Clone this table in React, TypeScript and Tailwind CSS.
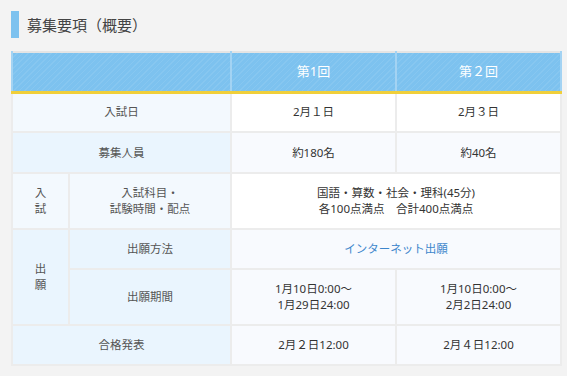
export default function App() {
  const label = "border-2 border-[#ececec] text-center align-middle text-[11.5px] leading-[16px] text-[#555]"
  const data = "border-2 border-[#ececec] text-center align-middle text-[11.5px] leading-[16px] text-[#333]"

  return (
    <div
      className="h-[376px] w-[567px] bg-[#f3f3f3] pl-[11px] pt-[11px]"
      style={{ fontFamily: '"Noto Sans", "Noto Sans CJK JP", sans-serif' }}
    >
      {/* Title */}
      <div className="flex h-[27px] items-center">
        <div className="h-full w-[8px] bg-[#7dc2ef]" />
        <h2 className="ml-[8px] text-[15px] leading-[20px] text-[#444]">募集要項（概要）</h2>
      </div>

      <table className="mt-[13px] w-[549px] table-fixed border-collapse border-2 border-[#e4e4e4]">
        <colgroup>
          <col className="w-[57px]" />
          <col className="w-[162px]" />
          <col className="w-[165px]" />
          <col className="w-[165px]" />
        </colgroup>
        <thead>
          <tr className="h-[40px] bg-[#7dc2ef] bg-[repeating-linear-gradient(135deg,rgba(255,255,255,0.08)_0px,rgba(255,255,255,0.08)_1px,transparent_1px,transparent_4px)]">
            <th colSpan={2} className="border-x-2 border-b-[3px] border-x-[#a3d3f3] border-b-[#f0cf3a]" />
            <th className="border-x-2 border-b-[3px] border-x-[#a3d3f3] border-b-[#f0cf3a] text-[13px] font-normal text-white">第1回</th>
            <th className="border-x-2 border-b-[3px] border-x-[#a3d3f3] border-b-[#f0cf3a] text-[13px] font-normal text-white">第２回</th>
          </tr>
        </thead>
        <tbody>
          <tr className="h-[40px]">
            <td colSpan={2} className={`${label} bg-[#f3f9fe]`}>入試日</td>
            <td className={`${data} bg-white`}>2月１日</td>
            <td className={`${data} bg-white`}>2月３日</td>
          </tr>
          <tr className="h-[41px]">
            <td colSpan={2} className={`${label} bg-[#eaf5fe]`}>募集人員</td>
            <td className={`${data} bg-[#f8fafe]`}>約180名</td>
            <td className={`${data} bg-[#f8fafe]`}>約40名</td>
          </tr>
          <tr className="h-[56px]">
            <td className={`${label} bg-[#f3f9fe]`}>
              入<br />試
            </td>
            <td className={`${label} bg-[#f3f9fe]`}>
              入試科目・<br />試験時間・配点
            </td>
            <td colSpan={2} className={`${data} bg-white`}>
              国語・算数・社会・理科(45分)<br />各100点満点　合計400点満点
            </td>
          </tr>
          <tr className="h-[40px]">
            <td rowSpan={2} className={`${label} bg-[#eaf5fe]`}>
              出<br />願
            </td>
            <td className={`${label} bg-[#eaf5fe]`}>出願方法</td>
            <td colSpan={2} className={`${data} bg-[#f8fafe]`}>
              <a href="#" className="text-[#3d86cc]">インターネット出願</a>
            </td>
          </tr>
          <tr className="h-[56px]">
            <td className={`${label} bg-[#eaf5fe]`}>出願期間</td>
            <td className={`${data} bg-[#f8fafe]`}>
              1月10日0:00～<br />1月29日24:00
            </td>
            <td className={`${data} bg-[#f8fafe]`}>
              1月10日0:00～<br />2月2日24:00
            </td>
          </tr>
          <tr className="h-[40px]">
            <td colSpan={2} className={`${label} bg-[#eaf5fe]`}>合格発表</td>
            <td className={`${data} bg-[#f8fafe]`}>2月２日12:00</td>
            <td className={`${data} bg-[#f8fafe]`}>2月４日12:00</td>
          </tr>
        </tbody>
      </table>
    </div>
  )
}
